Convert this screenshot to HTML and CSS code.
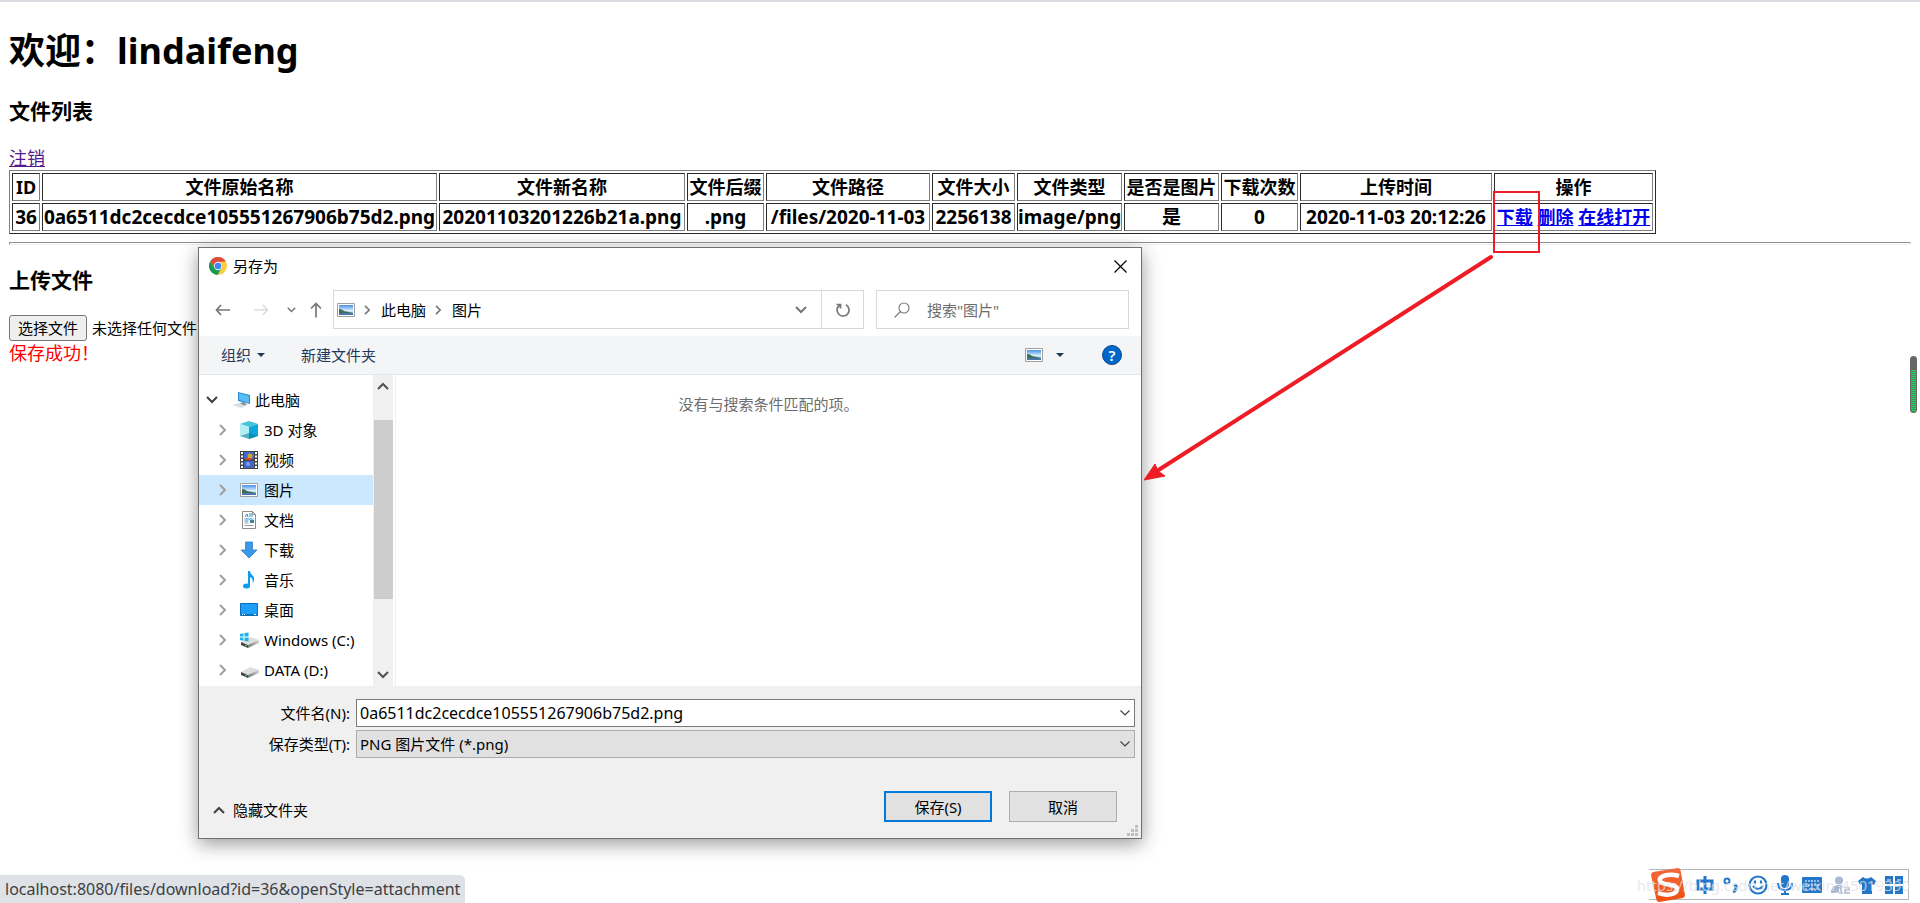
FILE: index.html
```html
<!DOCTYPE html>
<html lang="zh-CN">
<head>
<meta charset="utf-8">
<title>文件列表</title>
<link rel="stylesheet" href="styles.css">
</head>
<body>
<svg class="defs" width="0" height="0" aria-hidden="true">
  <defs>
    <linearGradient id="sky" x1="0" y1="0" x2="0" y2="1"><stop offset="0" stop-color="#4a8fe8"/><stop offset=".55" stop-color="#d5ecfb"/><stop offset="1" stop-color="#8dbbe6"/></linearGradient>
    <linearGradient id="disk" x1="0" y1="0" x2="1" y2="0"><stop offset="0" stop-color="#777"/><stop offset="1" stop-color="#d2d2d2"/></linearGradient>
    <linearGradient id="sogou" x1="0" y1="0" x2="0" y2="1"><stop offset="0" stop-color="#f26a3d"/><stop offset="1" stop-color="#f04e0e"/></linearGradient>
    <symbol id="chev" viewBox="0 0 8 12"><path d="M1 1l5 5-5 5" fill="none" stroke="currentColor" stroke-width="2"/></symbol>
    <symbol id="down" viewBox="0 0 12 8"><path d="M1 1l5 5 5-5" fill="none" stroke="currentColor" stroke-width="2"/></symbol>
    <symbol id="thin" viewBox="0 0 10 6"><path d="M.5.5L5 5 9.500.5" fill="none" stroke="currentColor" stroke-width="1.200"/></symbol>
    <symbol id="picture" viewBox="0 0 18 14"><path d="M.5.5h17v13H.5z" fill="#fff" stroke="#a0a0a0"/><path d="M2 2h14v10H2z" fill="url(#sky)"/><path d="M2 6c3 0 4 2 7 2.500 3 .5 5 1 7 1.200V10H2z" fill="#3f6d5a"/><path d="M2 10h14v2H2z" fill="#4677a6"/></symbol>
    <symbol id="drive" viewBox="0 0 20 16"><path d="M1 10L10 5l9 3-9 5z" fill="#dedede"/><path d="M1 10l7 3v3l-7-3z" fill="#444"/><path d="M8 13l11-5v3L8 16z" fill="url(#disk)"/><path d="M5 13h2v1H5z" fill="#31d34f"/></symbol>
  </defs>
</svg>

<main class="page">
  <h1>欢迎：lindaifeng</h1>
  <h3>文件列表</h3>
  <a class="logout" href="#logout">注销</a>
  <table class="files" border="1">
    <colgroup><col class="c-id"><col class="c-name"><col class="c-new"><col class="c-ext"><col class="c-path"><col class="c-size"><col class="c-type"><col class="c-img"><col class="c-count"><col class="c-time"><col class="c-op"></colgroup>
    <tr><th>ID</th><th>文件原始名称</th><th>文件新名称</th><th>文件后缀</th><th>文件路径</th><th>文件大小</th><th>文件类型</th><th>是否是图片</th><th>下载次数</th><th>上传时间</th><th>操作</th></tr>
    <tr class="record"><th>36</th><th>0a6511dc2cecdce105551267906b75d2.png</th><th>20201103201226b21a.png</th><th>.png</th><th>/files/2020-11-03</th><th>2256138</th><th>image/png</th><th>是</th><th>0</th><th>2020-11-03 20:12:26</th><th class="ops"><a href="#download">下载</a> <a href="#delete">删除</a> <a href="#open">在线打开</a></th></tr>
  </table>
  <hr>
  <h3 class="upload-title">上传文件</h3>
  <div class="upload"><button class="choose" type="button">选择文件</button><span>未选择任何文件</span></div>
  <div class="message">保存成功！</div>
</main>

<section class="dialog" role="dialog" aria-label="另存为">
  <header class="titlebar">
    <svg width="18" height="18" viewBox="0 0 18 18"><circle cx="9" cy="9" r="9" fill="#fccd43"/><path d="M1.200 4.500A9 9 0 0 1 16.800 4.500L9 5 5.500 11z" fill="#db4c3f"/><path d="M1.200 4.500A9 9 0 0 0 8.500 18L12.500 11 5.500 11z" fill="#159c55"/><circle cx="9" cy="9" r="4.200" fill="#f3f3f3"/><circle cx="9" cy="9" r="3.300" fill="#4285f4"/></svg>
    <span>另存为</span>
    <button class="plain close" type="button" aria-label="关闭"><svg width="13" height="13" viewBox="0 0 13 13"><path d="M.5.5l12 12m0-12l-12 12" stroke="#000" stroke-width="1.200"/></svg></button>
  </header>
  <nav class="navbar">
    <div class="arrows">
      <button class="plain" type="button" aria-label="后退"><svg width="16" height="12" viewBox="0 0 16 12" fill="none" stroke="#777" stroke-width="1.700"><path d="M6 1L1.500 6 6 11M1 6h14"/></svg></button>
      <button class="plain" type="button" aria-label="前进"><svg width="16" height="12" viewBox="0 0 16 12" fill="none" stroke="#ddd" stroke-width="1.700"><path d="M10 1l4.500 5L10 11M15 6H1"/></svg></button>
      <button class="plain recent" type="button" aria-label="最近位置"><svg width="9" height="6"><use href="#down"/></svg></button>
      <button class="plain" type="button" aria-label="上移"><svg width="12" height="16" viewBox="0 0 12 16" fill="none" stroke="#777" stroke-width="1.700"><path d="M1 6.500L6 1.500l5 5M6 1v14.500"/></svg></button>
    </div>
    <div class="address">
      <svg width="18" height="14"><use href="#picture"/></svg>
      <svg class="sep" width="7" height="10"><use href="#chev"/></svg><span>此电脑</span>
      <svg class="sep" width="7" height="10"><use href="#chev"/></svg><span>图片</span>
      <button class="plain history" type="button" aria-label="历史"><svg width="12" height="8"><use href="#down"/></svg></button>
      <button class="plain refresh" type="button" aria-label="刷新"><svg width="16" height="16" viewBox="0 0 16 16" fill="none" stroke="#777" stroke-width="1.700"><path d="M11 2.800A6 6 0 1 1 4.500 3.200M1.500 2.500h4v4"/></svg></button>
    </div>
    <label class="search"><svg width="16" height="16" viewBox="0 0 16 16" fill="none" stroke="#777" stroke-width="1.100"><circle cx="10" cy="6" r="5"/><path d="M6.500 9.500L.5 15.500"/></svg><input type="text" aria-label="搜索" placeholder='搜索"图片"'></label>
  </nav>
  <div class="toolbar">
    <button class="plain" type="button">组织<i class="caret"></i></button>
    <button class="plain" type="button">新建文件夹</button>
    <button class="plain view" type="button" aria-label="视图"><svg width="18" height="14"><use href="#picture"/></svg><i class="caret"></i></button>
    <button class="help" type="button" aria-label="帮助">?</button>
  </div>
  <div class="browser">
    <ul class="tree">
      <li class="root"><svg class="twist" width="12" height="8"><use href="#down"/></svg><svg width="20" height="18" viewBox="0 0 20 18"><path d="M7 1l12 3v9L7 10z" fill="#2e86c8"/><path d="M8 2l10 3v7L8 9z" fill="#55bdf8"/><path d="M9 12l4-1 3 3-5 1z" fill="#858f98"/><path d="M1 14l7-2 7 3-5 2z" fill="#d6dde3"/></svg>此电脑</li>
      <li><svg class="twist" width="8" height="12"><use href="#chev"/></svg><svg width="18" height="18" viewBox="0 0 18 18"><path d="M0 3l9-3 9 3-9 3z" fill="#42c4da"/><path d="M0 3l9 3v12l-9-3z" fill="#b5eef2"/><path d="M18 3L9 6v12l9-3z" fill="#0aa6dc"/><path d="M0 15l9-3 9 3-9 3z" fill="#067f9a" opacity=".55"/></svg>3D 对象</li>
      <li><svg class="twist" width="8" height="12"><use href="#chev"/></svg><svg width="18" height="18" viewBox="0 0 18 18"><path d="M0 0h18v18H0z" fill="#444"/><path d="M4 1h10v7H4zm0 9h10v7H4z" fill="#4169c9"/><circle cx="10" cy="5" r="2.500" fill="#d2a52c"/><circle cx="8" cy="13" r="2" fill="#7aa0ef"/><path d="M5 7h7v2H5z" fill="#d14532"/><path d="M2 1v17M16 1v17" stroke="#fff" stroke-width="2" stroke-dasharray="2 1.500"/></svg>视频</li>
      <li class="selected"><svg class="twist" width="8" height="12"><use href="#chev"/></svg><svg width="18" height="14"><use href="#picture"/></svg>图片</li>
      <li><svg class="twist" width="8" height="12"><use href="#chev"/></svg><svg width="18" height="18" viewBox="0 0 18 18"><path d="M2.500.5h10l3 3v14h-13z" fill="#fff" stroke="#8c8c8c"/><path d="M12.500.5v3h3" fill="none" stroke="#8c8c8c"/><path d="M5 6l2-3 1 3M9 3h3M9 5h4M4.500 8h9M4.500 10h4" fill="none" stroke="#2d8fd0"/><path d="M10 9h4v3h-4z" fill="#3f8890"/><path d="M4.500 12h4M4.500 14.500h9" stroke="#999"/></svg>文档</li>
      <li><svg class="twist" width="8" height="12"><use href="#chev"/></svg><svg width="18" height="18" viewBox="0 0 18 18"><path d="M5.500 1h7v8H17l-8 8-8-8h4.500z" fill="#3a98e8" stroke="#2c7fc8" stroke-width=".8"/></svg>下载</li>
      <li><svg class="twist" width="8" height="12"><use href="#chev"/></svg><svg width="18" height="18" viewBox="0 0 18 18"><ellipse cx="6.500" cy="15" rx="3.500" ry="2.500" fill="#0d9cf0"/><path d="M8 0h2c0 4 5 4 4 9-.2 1.500-1 2.500-1.500 3 .8-4-.8-5-2.500-6v9H8z" fill="#0d9cf0"/></svg>音乐</li>
      <li><svg class="twist" width="8" height="12"><use href="#chev"/></svg><svg width="18" height="14" viewBox="0 0 18 14"><path d="M.5.5h17v12H.5z" fill="#1ca0fa" stroke="#0a6fb8"/><path d="M1 11h16v1.500H1z" fill="#0b70c0"/><path d="M2 11.500h1m1 0h1m9 0h2" stroke="#fff"/></svg>桌面</li>
      <li><svg class="twist" width="8" height="12"><use href="#chev"/></svg><svg width="20" height="16" viewBox="0 0 20 16"><use href="#drive"/><path d="M0 2l3.500-.7v3.200H0zM4.500 1L8.500.4v4.100h-4zM0 5.500h3.500v3.200L0 8zM4.500 5.500h4v4l-4-.7z" fill="#18b4ee"/></svg>Windows (C:)</li>
      <li><svg class="twist" width="8" height="12"><use href="#chev"/></svg><svg width="20" height="16"><use href="#drive"/></svg>DATA (D:)</li>
    </ul>
    <div class="scroll"><svg width="12" height="8" viewBox="0 0 12 8"><path d="M1 7l5-5 5 5" fill="none" stroke="#505050" stroke-width="2"/></svg><div class="thumb"></div><svg width="12" height="8"><use href="#down"/></svg></div>
    <div class="pane">没有与搜索条件匹配的项。</div>
  </div>
  <form class="form">
    <label for="filename">文件名(N):</label>
    <div class="combo"><input id="filename" type="text" value="0a6511dc2cecdce105551267906b75d2.png"><svg width="10" height="6"><use href="#thin"/></svg></div>
    <label for="filetype">保存类型(T):</label>
    <div class="combo"><select id="filetype"><option>PNG 图片文件 (*.png)</option></select><svg width="10" height="6"><use href="#thin"/></svg></div>
  </form>
  <footer class="actions">
    <button class="plain hide" type="button"><svg width="12" height="8" viewBox="0 0 12 8"><path d="M1 7l5-5 5 5" fill="none" stroke="#404040" stroke-width="2"/></svg>隐藏文件夹</button>
    <button class="btn primary" type="button">保存(S)</button>
    <button class="btn" type="button">取消</button>
  </footer>
  <svg class="grip" width="11" height="11" viewBox="0 0 11 11" fill="#bfbfbf"><path d="M8 0h3v3H8zM4 4h3v3H4zM8 4h3v3H8zM0 8h3v3H0zM4 8h3v3H4zM8 8h3v3H8z"/></svg>
</section>

<div class="mark"></div>
<svg class="pointer" width="352" height="228" viewBox="0 0 352 228"><path d="M348 3L14 217" stroke="#ee1c25" stroke-width="4" stroke-linecap="round"/><path d="M1 226L12 210l3 7 7 5z" fill="#ee1c25" stroke="#ee1c25"/></svg>

<div class="meter"></div>
<div class="status">localhost:8080/files/download?id=36&amp;openStyle=attachment</div>

<div class="ime">
  <svg class="logo" width="38" height="36" viewBox="0 0 38 36"><path d="M4 5L29 1q2 0 2.500 2L36 28q0 2-2 3L10 35q-2 0-2.500-2L2 8q0-2 2-3z" fill="url(#sogou)"/><path d="M30 9C20 6 9 9 11 14s17 2 17 8-11 7-19 4" fill="none" stroke="#fff" stroke-width="4.500"/></svg>
  <svg width="18" height="20" viewBox="0 0 18 20" fill="none" stroke="#2277c8" stroke-width="3"><path d="M2 6h14v8H2zM9 1v18"/></svg>
  <svg width="16" height="18" viewBox="0 0 16 18" fill="none" stroke="#2277c8" stroke-width="2"><circle cx="4" cy="5" r="2.500"/><path d="M11 10h2q1 4-3 6" stroke-width="3"/></svg>
  <svg width="20" height="20" viewBox="0 0 20 20" fill="none" stroke="#2277c8" stroke-width="2.200"><circle cx="10" cy="10" r="8.500"/><path d="M7 5.500v3M13 5.500v3M5 11q5 6 10 0"/></svg>
  <svg width="16" height="20" viewBox="0 0 16 20" fill="none" stroke="#2277c8" stroke-width="2"><rect x="5" y="1" width="6" height="11" rx="3" fill="#2277c8"/><path d="M1 8q0 7 7 7t7-7M8 15v4M4 19h8"/></svg>
  <svg width="20" height="16" viewBox="0 0 20 16"><rect width="20" height="16" rx="1" fill="#2277c8"/><path d="M3 4h14M3 8h14" stroke="#fff" stroke-dasharray="2 1"/><path d="M3 12h2m2 0h6m2 0h2" stroke="#fff"/></svg>
  <svg class="user" width="20" height="18" viewBox="0 0 20 18"><circle cx="8" cy="4.500" r="4" fill="#a8b8d0"/><path d="M0 17q0-8 8-8 3 0 5 1H8v7z" fill="#a8b8d0"/><path d="M8 12l2-1v6m-2 0h4M13 11.500h5V14h-4v3h5" fill="none" stroke="#a8b8d0" stroke-width="1.500"/></svg>
  <svg width="18" height="18" viewBox="0 0 18 18"><path d="M5 1q4 3 8 0l5 4-2 4-2-1v10H4V8L2 9 0 5z" fill="#2277c8"/></svg>
  <svg width="18" height="18" viewBox="0 0 18 18"><path d="M0 0h8v8H0zM10 0h8v8h-8zM0 10h8v8H0zM10 10h8v8h-8z" fill="#2277c8"/><path d="M2 4h4M12 4h4" stroke="#fff"/></svg>
  <span class="watermark">https://blog.csdn.net/weixin_45019390</span>
</div>
</body>
</html>
```
FILE: styles.css
```css
* { box-sizing: border-box; }
body {
  margin: 0;
  min-height: 100vh;
  overflow: hidden;
  position: relative;
  border-top: 2px solid #dcdbe1;
  background: #fff;
  color: #000;
  font: 18px/24px "Noto Sans", "Noto Sans CJK SC", sans-serif;
}
button, input, select { font: inherit; color: inherit; }
svg { flex: none; }
.defs { position: absolute; }

.page { padding: 0 9px; }
h1 { margin: 25px 0 22px; font-size: 36px; line-height: 48px; }
h3 { margin: 0 0 21px; font-size: 21px; line-height: 28px; }
.logout { display: block; width: max-content; color: #551a8b; }
.files { border: 1px solid; border-color: #808080 #2b2b2b #2b2b2b #808080; border-spacing: 2px; table-layout: fixed; width: 1647px; }
.files th { padding: 1px 0; border: 1px solid; border-color: #2b2b2b #808080 #808080 #2b2b2b; white-space: nowrap; line-height: 24px; }
.files .record { font-size: 19px; }
.files .ops { font-size: 18px; }
.files a { color: #00e; }
.c-id { width: 28px; }
.c-name { width: 395px; }
.c-new { width: 246px; }
.c-ext { width: 77px; }
.c-path { width: 164px; }
.c-size { width: 83px; }
.c-type { width: 105px; }
.c-img { width: 95px; }
.c-count { width: 77px; }
.c-time { width: 192px; }
hr { height: 3px; margin: 8px 0 0; border: 1px solid; border-color: #909090 #eee #eee #909090; }
.upload-title { margin: 21px 0; }
.upload { display: flex; align-items: center; gap: 5px; font-size: 15px; }
.choose { height: 26px; padding: 0 8px; border: 1px solid #767676; border-radius: 3px; background: #efefef; }
.message { color: #f00; }

.dialog {
  position: absolute;
  left: 198px;
  top: 245px;
  width: 944px;
  border: 1px solid #707070;
  background: #fff;
  box-shadow: 0 5px 18px rgba(0, 0, 0, .4);
  font-size: 15px;
  line-height: 20px;
}
.plain { display: flex; align-items: center; padding: 0; border: 0; background: none; }
.titlebar { display: flex; align-items: center; gap: 6px; height: 36px; padding: 0 14px 0 10px; }
.close { margin-left: auto; }
.navbar { display: flex; align-items: center; height: 52px; padding: 0 12px 1px; color: #777; }
.arrows { display: flex; align-items: center; gap: 22px; width: 122px; padding-left: 4px; }
.arrows .recent { margin: 0 -8px 0 -4px; }
.address { display: flex; align-items: center; flex: 1; height: 39px; padding-left: 3px; border: 1px solid #d9d9d9; }
.address span { color: #000; }
.address .sep { margin: 0 10px 0 9px; }
.history { margin-left: auto; padding-right: 14px; }
.refresh { justify-content: center; width: 42px; height: 37px; border-left: 1px solid #d9d9d9; }
.search { display: flex; align-items: center; gap: 17px; width: 253px; height: 39px; margin-left: 12px; padding-left: 17px; border: 1px solid #d9d9d9; }
.search input { width: 180px; padding: 0; border: 0; outline: 0; }
.search input::placeholder { color: #6d6d6d; opacity: 1; }
.toolbar { display: flex; align-items: center; gap: 36px; height: 39px; padding: 0 19px 0 22px; border-bottom: 1px solid #e4e6e8; background: #f4f5f7; color: #1e395b; }
.caret { margin-left: 6px; border: 4px solid transparent; border-top-color: #1e395b; border-bottom: 0; }
.view { margin: 0 2px 0 auto; }
.view .caret { margin-left: 13px; }
.help { width: 20px; height: 20px; padding: 0; border: 1px solid #0a4a8f; border-radius: 50%; background: #0067c8; color: #fff; font-weight: 600; line-height: 16px; }
.browser { display: flex; height: 311px; }
.tree { width: 174px; margin: 0; padding: 10px 0 0; list-style: none; }
.tree li { display: flex; align-items: center; gap: 6px; height: 30px; padding-left: 20px; white-space: nowrap; }
.tree .root { padding-left: 7px; }
.tree .twist { margin-right: 7px; color: #a0a0a0; }
.tree .root .twist { color: #404040; }
.tree svg[width="20"] { margin-right: -2px; }
.tree .selected { background: #cce8ff; }
.scroll { display: flex; flex-direction: column; align-items: center; width: 20px; padding: 7px 0; background: #f0f0f0; color: #505050; }
.thumb { width: 19px; height: 179px; margin: 30px 0 auto; background: #cdcdcd; }
.pane { flex: 1; margin-left: 2px; padding-top: 19px; border-left: 1px solid #f0f0f0; color: #6d6d6d; text-align: center; }
.form { display: grid; grid-template-columns: 151px 1fr; gap: 3px 6px; padding: 13px 6px 0 0; background: #f0f0f0; }
.form label { align-self: center; text-align: right; }
.combo { position: relative; display: flex; }
.combo input, .combo select { flex: 1; height: 28px; padding: 0 3px; border: 1px solid #7a7a7a; border-radius: 0; outline: 0; background: #fff; appearance: none; }
.combo input { font-size: 16px; }
.combo select { border-color: #adadad; background: #e1e1e1; }
.combo svg { position: absolute; right: 5px; top: 11px; color: #404040; }
.actions { display: flex; align-items: center; gap: 17px; height: 80px; padding: 17px 24px 0 14px; background: #f0f0f0; }
.hide { gap: 8px; margin-right: auto; padding-top: 6px; }
.btn { width: 108px; height: 31px; border: 1px solid #adadad; background: #e1e1e1; }
.primary { border: 2px solid #0078d7; }
.grip { position: absolute; right: 3px; bottom: 2px; }

.mark { position: absolute; left: 1493px; top: 189px; width: 47px; height: 62px; border: 2px solid #ee1c25; }
.pointer { position: absolute; left: 1143px; top: 252px; }
.meter {
  position: absolute;
  right: 3px;
  top: 354px;
  width: 7px;
  height: 57px;
  border: 1px solid #666;
  border-top-width: 14px;
  border-radius: 4px;
  background: repeating-linear-gradient(#19d65a 0 1px, #4c8a5d 1px 2px);
}
.status { position: absolute; left: 0; bottom: 0; height: 28px; padding: 0 5px; border-top-right-radius: 5px; background: #dee1e6; color: #3c4043; font-size: 16px; line-height: 28px; }
.ime { position: absolute; right: 11px; bottom: 3px; display: flex; align-items: center; gap: 9px; height: 31px; padding-right: 5px; border: 1px solid #b4b4bc; border-left: 0; background: #fff; }
.user { margin-right: -2px; }
.watermark { position: absolute; right: -2px; top: 5px; color: rgba(225, 225, 230, .75); font-size: 15px; line-height: 20px; }
```
